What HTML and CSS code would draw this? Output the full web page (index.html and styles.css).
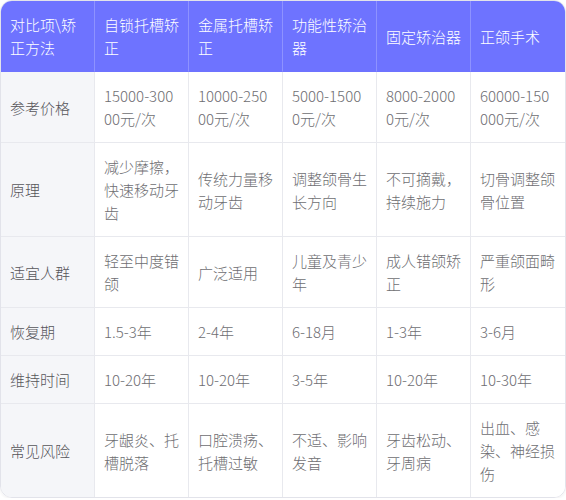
FILE: index.html
```html
<!DOCTYPE html>
<html lang="zh">
<head>
<meta charset="utf-8">
<link rel="stylesheet" href="styles.css">
</head>
<body>
<div class="wrap">
<table class="cmp">
<thead>
<tr><th>对比项\矫正方法</th><th>自锁托槽矫正</th><th>金属托槽矫正</th><th>功能性矫治器</th><th>固定矫治器</th><th>正颌手术</th></tr>
</thead>
<tbody>
<tr><td class="k">参考价格</td><td>15000-30000元/次</td><td>10000-25000元/次</td><td>5000-15000元/次</td><td>8000-20000元/次</td><td>60000-150000元/次</td></tr>
<tr><td class="k">原理</td><td>减少摩擦，快速移动牙齿</td><td>传统力量移动牙齿</td><td>调整颌骨生长方向</td><td>不可摘戴，持续施力</td><td>切骨调整颌骨位置</td></tr>
<tr><td class="k">适宜人群</td><td>轻至中度错颌</td><td>广泛适用</td><td>儿童及青少年</td><td>成人错颌矫正</td><td>严重颌面畸形</td></tr>
<tr><td class="k">恢复期</td><td>1.5-3年</td><td>2-4年</td><td>6-18月</td><td>1-3年</td><td>3-6月</td></tr>
<tr><td class="k">维持时间</td><td>10-20年</td><td>10-20年</td><td>3-5年</td><td>10-20年</td><td>10-30年</td></tr>
<tr><td class="k">常见风险</td><td>牙龈炎、托槽脱落</td><td>口腔溃疡、托槽过敏</td><td>不适、影响发音</td><td>牙齿松动、牙周病</td><td>出血、感染、神经损伤</td></tr>
</tbody>
</table>
</div>
</body>
</html>
```
FILE: styles.css
```css
html, body {
  margin: 0;
  padding: 0;
  background: #ffffff;
}
.wrap {
  width: 564px;
  border: 1px solid #e2e3ea;
  border-radius: 12px;
  overflow: hidden;
  box-shadow: 0 1px 3px rgba(0,0,0,0.06);
}
.cmp {
  width: 564px;
  table-layout: fixed;
  border-collapse: separate;
  border-spacing: 0;
  font-family: "Noto Sans CJK SC", "Noto Sans", sans-serif;
  font-size: 15px;
  font-weight: 300;
  line-height: 23px;
}
.cmp th, .cmp td {
  padding: 12px 9px;
  text-align: left;
  vertical-align: middle;
  word-break: break-all;
  border-right: 1px solid #e8e9ee;
  border-bottom: 1px solid #e8e9ee;
}
.cmp tr > :last-child {
  border-right: none;
}
.cmp tbody tr:last-child td {
  border-bottom: none;
}
.cmp th {
  background: #6e73ff;
  color: #ffffff;
  font-weight: 300;
  border-right-color: #8e92ff;
  border-bottom-color: #6e73ff;
}
.cmp td {
  color: #6e6e72;
  background: #ffffff;
}
.cmp td.k {
  background: #f5f6f9;
  color: #55555a;
}
```
